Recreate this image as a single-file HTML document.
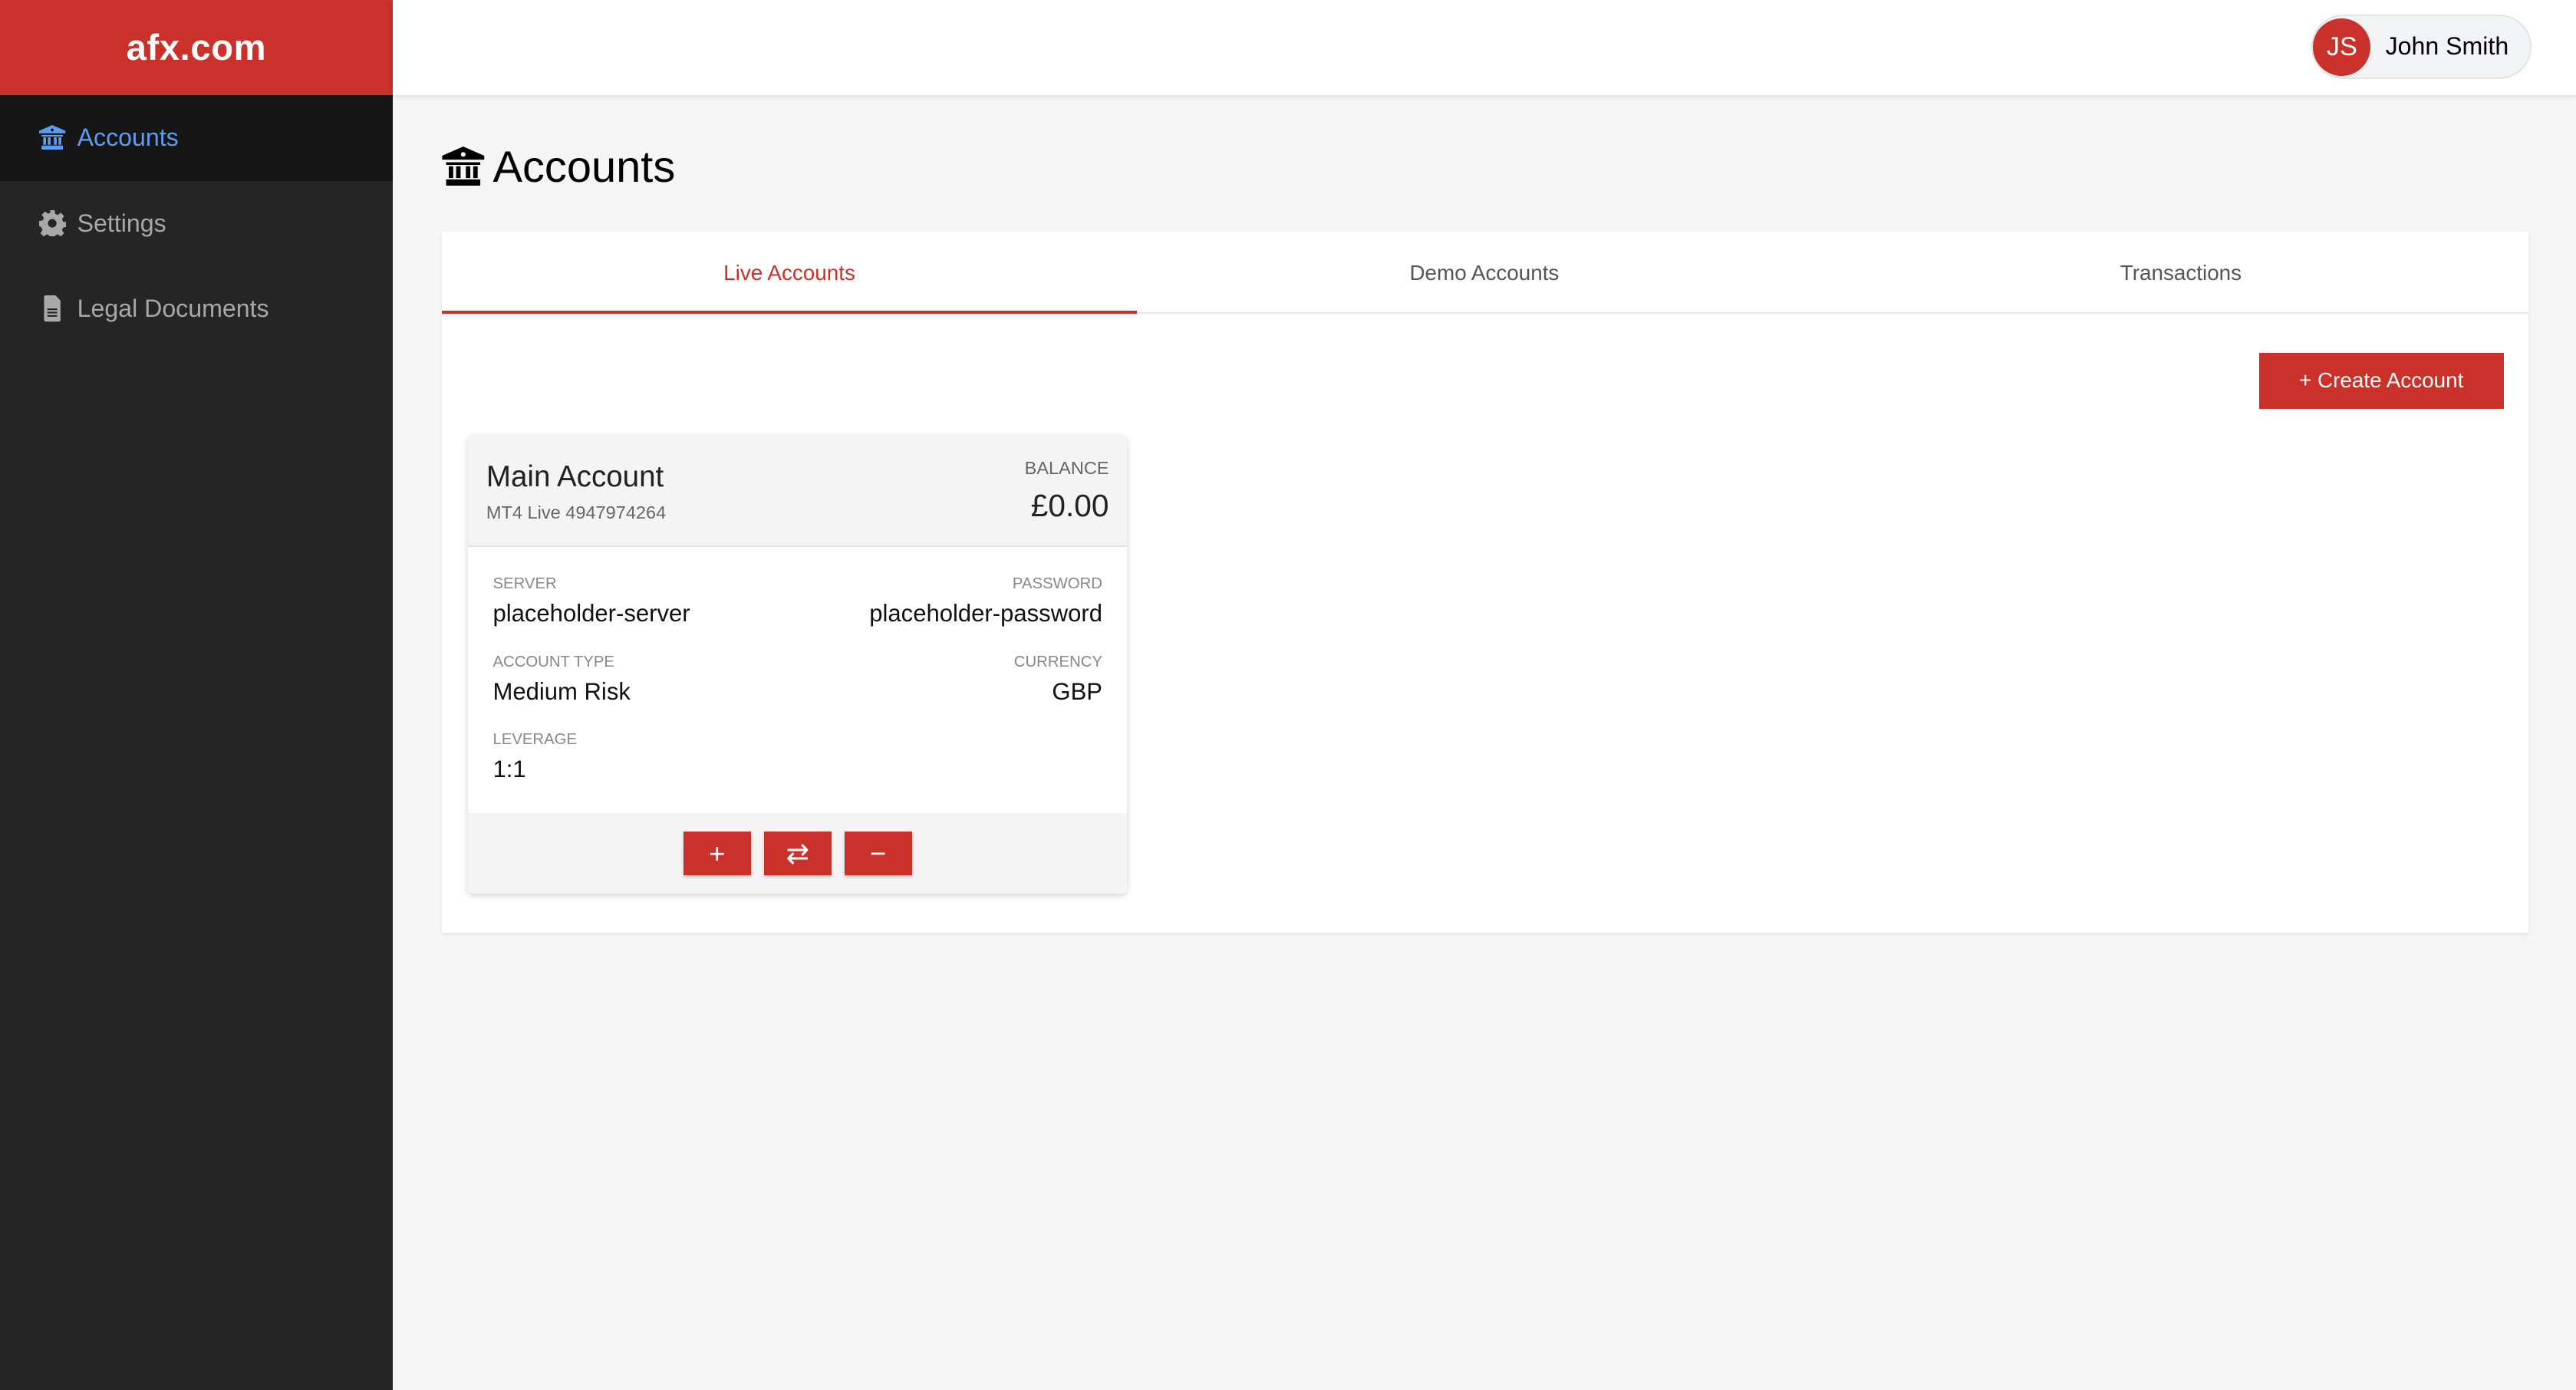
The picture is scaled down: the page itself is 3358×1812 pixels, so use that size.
<!DOCTYPE html>
<html><head><meta charset="utf-8"><style>
html,body{margin:0;padding:0;width:3358px;height:1812px;overflow:hidden;background:#f5f5f5}
#z{zoom:2.14158;width:1568px;height:846px;position:relative;font-family:"Liberation Sans",sans-serif;color:#000}
.abs{position:absolute}
#side{left:0;top:0;width:239px;height:846px;background:#252525}
#logo{left:0;top:0;width:239px;height:58px;background:#c9312a;color:#fff;font-weight:bold;font-size:22px;text-align:center;line-height:58px;letter-spacing:0.3px}
.nav{left:0;width:239px;height:52px;line-height:52px;font-size:15px;color:#a8a8a8}
.nav svg{position:absolute;left:24px;top:18px}
.nav span{position:absolute;left:47px}
#top{left:239px;top:0;width:1329px;height:58px;background:#fff;box-shadow:0 1px 3px rgba(0,0,0,.12)}
#pill{left:1407px;top:9px;width:132px;height:37px;border:1px solid #e2e3e7;background:#f2f3f5;border-radius:20px}
#av{left:1408px;top:11px;width:35px;height:35px;border-radius:50%;background:#c9312a;color:#fff;font-size:16px;line-height:35px;text-align:center}
#panel{left:269px;top:141px;width:1270px;height:427px;background:#fff;box-shadow:0 1px 2px rgba(0,0,0,.08)}
.tab{top:141px;height:50px;line-height:50px;font-size:13px;color:#555;text-align:center;width:423px}
.card{left:285px;top:265px;width:401px;height:279px;background:#fff;border-radius:3px;box-shadow:0 1px 4px rgba(0,0,0,.18);overflow:hidden}
.lbl{font-size:9.5px;color:#888}
.val{font-size:14.5px;color:#111}
.btn{top:506px;width:41px;height:27px;background:#c9312a;box-shadow:0 1px 2px rgba(0,0,0,.2);color:#fff;text-align:center;line-height:27px;font-size:17px}
</style></head><body><div id="z">
<div id="side" class="abs"></div>
<div id="logo" class="abs">afx.com</div>
<div class="abs nav" style="top:58px;background:#161616;color:#5e9bf2"><svg width="16" height="15" viewBox="0 0 16 15"><path fill="#5e9bf2" d="M8 0L0 3.5V5h16V3.5z M1.5 6h13v1h-13z M2.5 7.5h1.7v4.5H2.5z M5.3 7.5H7v4.5H5.3z M9 7.5h1.7v4.5H9z M11.8 7.5h1.7v4.5h-1.7z M1.5 12.5h13V15h-13z"/><circle cx="8" cy="3" r="0.9" fill="#161616"/></svg><span>Accounts</span></div>
<div class="abs nav" style="top:110px"><svg width="16" height="16" viewBox="0 0 16 16"><path fill="#a8a8a8" d="M6.6 0h2.8l.4 2.2 1.5.7 1.9-1.3 2 2-1.3 1.9.7 1.5 2.2.4v2.8l-2.2.4-.7 1.5 1.3 1.9-2 2-1.9-1.3-1.5.7-.4 2.2H6.6l-.4-2.2-1.5-.7-1.9 1.3-2-2 1.3-1.9-.7-1.5L0 9.4V6.6l2.2-.4.7-1.5L1.6 2.8l2-2 1.9 1.3 1.5-.7z"/><circle cx="8" cy="8" r="2.6" fill="#252525"/></svg><span>Settings</span></div>
<div class="abs nav" style="top:162px"><svg width="16" height="16" viewBox="0 0 16 16"><path fill="#a8a8a8" d="M4 0h6l3 3.2V15a1 1 0 0 1-1 1H4a1 1 0 0 1-1-1V1a1 1 0 0 1 1-1z"/><path fill="#252525" d="M5 8h6v1H5zM5 10h6v1H5zM5 12h6v1H5z"/></svg><span>Legal Documents</span></div>
<div id="top" class="abs"></div>
<div id="pill" class="abs"></div>
<div id="av" class="abs">JS</div>
<div class="abs" style="left:1452px;top:18px;font-size:15px;line-height:20px">John Smith</div>
<svg class="abs" style="left:269px;top:89px" width="26" height="24" viewBox="0 0 16 15"><path fill="#000" d="M8 0L0 3.5V5h16V3.5z M1.5 6h13v1h-13z M2.5 7.5h1.7v4.5H2.5z M5.3 7.5H7v4.5H5.3z M9 7.5h1.7v4.5H9z M11.8 7.5h1.7v4.5h-1.7z M1.5 12.5h13V15h-13z"/><circle cx="8" cy="3" r="0.9" fill="#f5f5f5"/></svg>
<div class="abs" style="left:300px;top:85px;font-size:27px;line-height:34px">Accounts</div>
<div id="panel" class="abs"></div>
<div class="abs" style="left:269px;top:190px;width:1270px;height:1px;background:#e6e6e6"></div>
<div class="abs tab" style="left:269px;color:#c9312a">Live Accounts</div>
<div class="abs" style="left:269px;top:189px;width:423px;height:2px;background:#c9312a"></div>
<div class="abs tab" style="left:692px">Demo Accounts</div>
<div class="abs tab" style="left:1116px">Transactions</div>
<div class="abs" style="left:1375px;top:215px;width:149px;height:34px;background:#c9312a;color:#fff;font-size:13px;line-height:34px;text-align:center">+ Create Account</div>
<div class="card abs">
 <div class="abs" style="left:0;top:0;width:401px;height:67px;background:#f4f4f4;border-bottom:1px solid #e4e4e4"></div>
 <div class="abs" style="left:11px;top:15px;font-size:18px;color:#222">Main Account</div>
 <div class="abs" style="left:11px;top:41px;font-size:11px;color:#666">MT4 Live 4947974264</div>
 <div class="abs" style="right:11px;top:14px;font-size:11px;color:#666">BALANCE</div>
 <div class="abs" style="right:11px;top:32px;font-size:19px;color:#222">£0.00</div>
 <div class="abs lbl" style="left:15px;top:85px">SERVER</div>
 <div class="abs val" style="left:15px;top:100px">placeholder-server</div>
 <div class="abs lbl" style="right:15px;top:85px">PASSWORD</div>
 <div class="abs val" style="right:15px;top:100px">placeholder-password</div>
 <div class="abs lbl" style="left:15px;top:133px">ACCOUNT TYPE</div>
 <div class="abs val" style="left:15px;top:148px">Medium Risk</div>
 <div class="abs lbl" style="right:15px;top:133px">CURRENCY</div>
 <div class="abs val" style="right:15px;top:148px">GBP</div>
 <div class="abs lbl" style="left:15px;top:180px">LEVERAGE</div>
 <div class="abs val" style="left:15px;top:195px">1:1</div>
 <div class="abs" style="left:0;top:230px;width:401px;height:49px;background:#f4f4f4"></div>
</div>
<div class="abs btn" style="left:416px">+</div>
<div class="abs btn" style="left:465px">⇄</div>
<div class="abs btn" style="left:514px">−</div>
</div></body></html>
